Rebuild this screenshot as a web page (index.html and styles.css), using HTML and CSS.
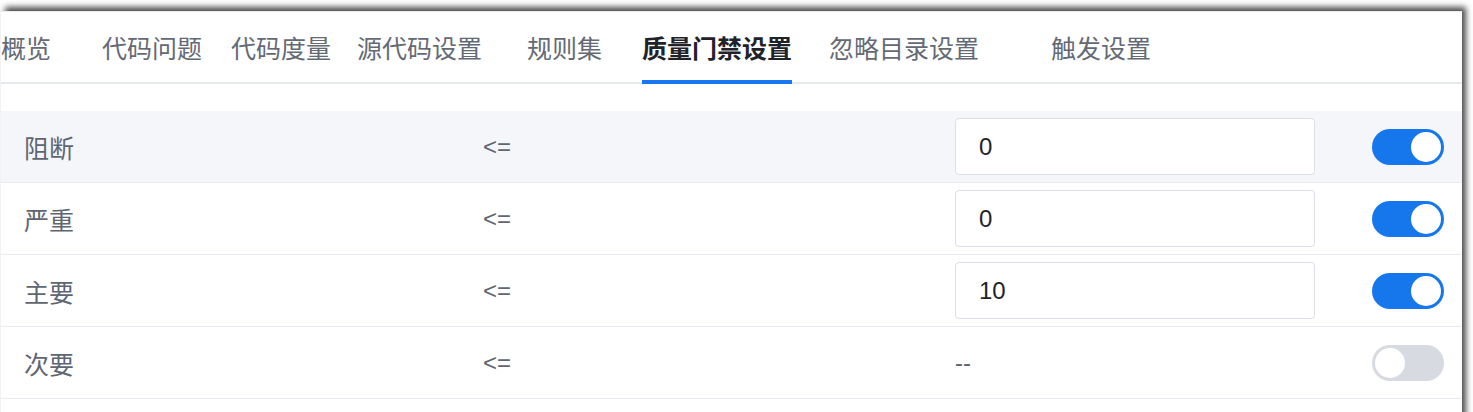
FILE: index.html
```html
<!DOCTYPE html>
<html lang="zh-CN">
<head>
<meta charset="utf-8">
<title>质量门禁设置</title>
<link rel="stylesheet" href="styles.css">
</head>
<body>
<div class="frame">
  <nav class="tabs">
    <div class="tab">概览</div>
    <div class="tab">代码问题</div>
    <div class="tab">代码度量</div>
    <div class="tab">源代码设置</div>
    <div class="tab">规则集</div>
    <div class="tab active">质量门禁设置</div>
    <div class="tab">忽略目录设置</div>
    <div class="tab">触发设置</div>
  </nav>
  <div class="table">
    <div class="row highlight">
      <div class="label">阻断</div>
      <div class="op">&lt;=</div>
      <div class="value"><div class="input">0</div></div>
      <div class="switch-cell"><span class="switch on"><span class="knob"></span></span></div>
    </div>
    <div class="row">
      <div class="label">严重</div>
      <div class="op">&lt;=</div>
      <div class="value"><div class="input">0</div></div>
      <div class="switch-cell"><span class="switch on"><span class="knob"></span></span></div>
    </div>
    <div class="row">
      <div class="label">主要</div>
      <div class="op">&lt;=</div>
      <div class="value"><div class="input">10</div></div>
      <div class="switch-cell"><span class="switch on"><span class="knob"></span></span></div>
    </div>
    <div class="row">
      <div class="label">次要</div>
      <div class="op">&lt;=</div>
      <div class="value"><span class="empty">--</span></div>
      <div class="switch-cell"><span class="switch off"><span class="knob"></span></span></div>
    </div>
  </div>
</div>
</body>
</html>
```

FILE: styles.css
```css
html, body {
  margin: 0;
  padding: 0;
  background: #ffffff;
  height: 100%;
  overflow: hidden;
}

body {
  font-family: "Liberation Sans", "Noto Sans CJK SC", sans-serif;
  color: #5f6673;
}

.frame {
  margin-top: 11px;
  margin-left: 1px;
  width: 1461px;
  height: 420px;
  background: #ffffff;
  border-top: 1px solid #ececec;
  box-shadow: 4px -4px 6px rgba(0, 0, 0, 0.7);
}

.tabs {
  display: flex;
  height: 72px;
  box-sizing: border-box;
  border-bottom: 2px solid #e6e9ee;
}

.tab {
  position: relative;
  font-family: "Noto Sans CJK SC", sans-serif;
  font-size: 25px;
  line-height: 70px;
  color: #646a75;
  white-space: nowrap;
}

.tab:nth-child(1) { margin-right: 51px; }
.tab:nth-child(2) { margin-right: 29px; }
.tab:nth-child(3) { margin-right: 26px; }
.tab:nth-child(4) { margin-right: 45px; }
.tab:nth-child(5) { margin-right: 40px; }
.tab:nth-child(6) { margin-right: 37px; }
.tab:nth-child(7) { margin-right: 72px; }

.tab.active {
  color: #1f2329;
  font-weight: 700;
}

.tab.active::after {
  content: "";
  position: absolute;
  left: 0;
  right: 0;
  bottom: -2px;
  height: 4px;
  background: #1677f0;
}

.table {
  margin-top: 27px;
}

.row {
  display: grid;
  grid-template-columns: 459px 472px 360px 1fr;
  align-items: center;
  height: 72px;
  box-sizing: border-box;
  padding-left: 23px;
  padding-right: 18px;
  border-bottom: 1px solid #e9ebf0;
}

.row.highlight {
  background: #f5f6fa;
}

.label {
  font-family: "Noto Sans CJK SC", sans-serif;
  font-size: 25px;
  color: #5f6673;
}

.op {
  font-size: 24px;
  color: #5f6673;
}

.input {
  height: 57px;
  box-sizing: border-box;
  border: 1px solid #dcdfe6;
  border-radius: 4px;
  background: #ffffff;
  padding-left: 23px;
  display: flex;
  align-items: center;
  font-size: 24px;
  color: #1f2329;
}

.empty {
  font-size: 24px;
  color: #5f6673;
}

.switch-cell {
  display: flex;
  justify-content: flex-end;
}

.switch {
  position: relative;
  display: block;
  width: 72px;
  height: 36px;
  border-radius: 18px;
  background: #1677ed;
}

.switch.off {
  background: #d7dae0;
}

.knob {
  position: absolute;
  top: 3px;
  right: 3px;
  width: 30px;
  height: 30px;
  border-radius: 50%;
  background: #ffffff;
}

.switch.off .knob {
  right: auto;
  left: 3px;
}
```
